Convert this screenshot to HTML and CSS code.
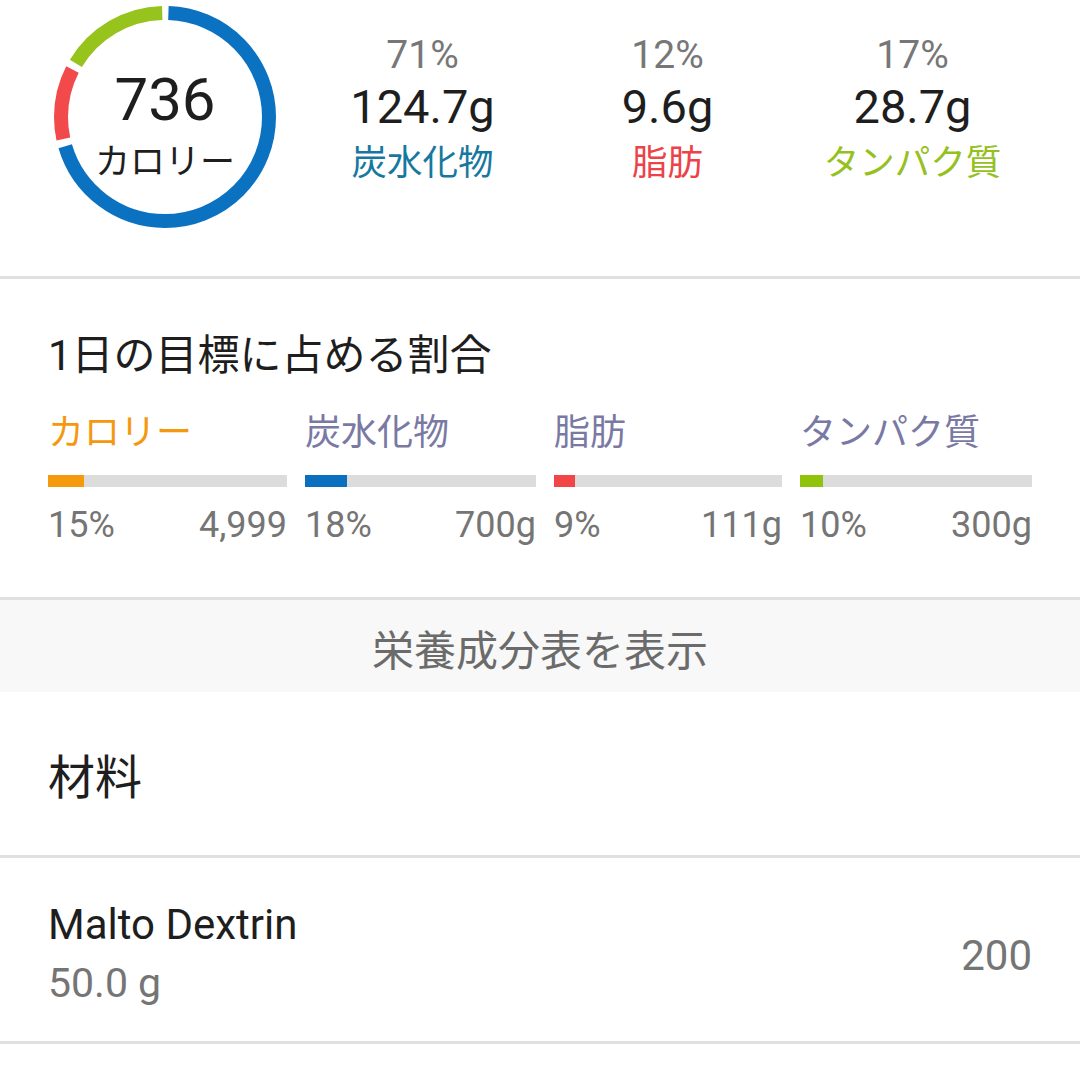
FILE: index.html
```html
<!DOCTYPE html>
<html lang="ja">
<head>
<meta charset="utf-8">
<link rel="stylesheet" href="styles.css">
</head>
<body>
<section class="summary">
  <div class="ring">
    <svg class="ring-svg" viewBox="0 0 222 222" width="222" height="222">
      <g transform="rotate(-90 111 111)">
        <circle cx="111" cy="111" r="104" fill="none" stroke="#0b72c2" stroke-width="14" stroke-dasharray="456.4 653.45" stroke-dashoffset="-3.5"/>
        <circle cx="111" cy="111" r="104" fill="none" stroke="#f24a4a" stroke-width="14" stroke-dasharray="71.4 653.45" stroke-dashoffset="-467.45"/>
        <circle cx="111" cy="111" r="104" fill="none" stroke="#96c31c" stroke-width="14" stroke-dasharray="104.1 653.45" stroke-dashoffset="-545.86"/>
      </g>
    </svg>
    <div class="ring-text">
      <div class="ring-num">736</div>
      <div class="ring-label">カロリー</div>
    </div>
  </div>
  <div class="macros">
    <div class="macro">
      <div class="macro-pct">71%</div>
      <div class="macro-val">124.7g</div>
      <div class="macro-name carb">炭水化物</div>
    </div>
    <div class="macro">
      <div class="macro-pct">12%</div>
      <div class="macro-val">9.6g</div>
      <div class="macro-name fat">脂肪</div>
    </div>
    <div class="macro">
      <div class="macro-pct">17%</div>
      <div class="macro-val">28.7g</div>
      <div class="macro-name protein">タンパク質</div>
    </div>
  </div>
</section>

<section class="goals">
  <h2 class="goals-title">1日の目標に占める割合</h2>
  <div class="goal-grid">
    <div class="goal">
      <div class="goal-name cal">カロリー</div>
      <div class="bar"><div class="fill fill-cal" style="width:15%"></div></div>
      <div class="goal-vals"><span>15%</span><span>4,999</span></div>
    </div>
    <div class="goal">
      <div class="goal-name">炭水化物</div>
      <div class="bar"><div class="fill fill-carb" style="width:18%"></div></div>
      <div class="goal-vals"><span>18%</span><span>700g</span></div>
    </div>
    <div class="goal">
      <div class="goal-name">脂肪</div>
      <div class="bar"><div class="fill fill-fat" style="width:9%"></div></div>
      <div class="goal-vals"><span>9%</span><span>111g</span></div>
    </div>
    <div class="goal">
      <div class="goal-name">タンパク質</div>
      <div class="bar"><div class="fill fill-protein" style="width:10%"></div></div>
      <div class="goal-vals"><span>10%</span><span>300g</span></div>
    </div>
  </div>
</section>

<div class="show-table">栄養成分表を表示</div>

<section class="ingredients-head">
  <h2 class="ing-title">材料</h2>
</section>

<div class="ing-row">
  <div class="ing-info">
    <div class="ing-name">Malto Dextrin</div>
    <div class="ing-amount">50.0 g</div>
  </div>
  <div class="ing-cal">200</div>
</div>
</body>
</html>
```

FILE: styles.css
```css
html, body {
  margin: 0;
  padding: 0;
  background: #ffffff;
}
body {
  font-family: Roboto, "Noto Sans CJK JP", sans-serif;
  color: #1e1e1e;
  width: 1080px;
}

/* top summary */
.summary {
  display: flex;
  height: 276px;
  border-bottom: 3px solid #e0e0e0;
  box-sizing: content-box;
}
.ring {
  display: grid;
  width: 222px;
  height: 222px;
  margin: 6px 0 0 54px;
}
.ring-svg, .ring-text {
  grid-area: 1 / 1;
}
.ring-text {
  display: flex;
  flex-direction: column;
  align-items: center;
  padding-top: 64px;
}
.ring-num {
  font-size: 60px;
  line-height: 60px;
  color: #1e1e1e;
}
.ring-label {
  font-size: 35px;
  line-height: 40px;
  margin-top: 13px;
  color: #1e1e1e;
}
.macros {
  display: grid;
  grid-template-columns: repeat(3, 245px);
  margin-left: 24px;
}
.macro {
  display: flex;
  flex-direction: column;
  align-items: center;
  padding-top: 33px;
}
.macro-pct {
  font-size: 39px;
  line-height: 44px;
  color: #777777;
}
.macro-val {
  font-size: 47px;
  line-height: 52px;
  margin-top: 4px;
  color: #1e1e1e;
}
.macro-name {
  font-size: 35.5px;
  line-height: 44px;
  margin-top: 8px;
}
.carb { color: #17789f; }
.fat { color: #ec4248; }
.protein { color: #95c11f; }

/* goals */
.goals {
  padding: 53px 48px 50px 48px;
  border-bottom: 3px solid #e0e0e0;
}
.goals-title {
  margin: 0;
  font-weight: 400;
  font-size: 42px;
  line-height: 48px;
  color: #1e1e1e;
}
.goal-grid {
  display: grid;
  grid-template-columns: 239px 231px 228px 232px;
  column-gap: 18px;
  margin-top: 31px;
}
.goal-name {
  font-size: 36px;
  line-height: 44px;
  color: #7a79a4;
}
.goal-name.cal { color: #f4990f; }
.bar {
  height: 12px;
  margin-top: 20px;
  background: #dcdcdc;
}
.fill { height: 100%; }
.fill-cal { background: #f59a0c; }
.fill-carb { background: #0b6fbf; }
.fill-fat { background: #f24545; }
.fill-protein { background: #92c30c; }
.goal-vals {
  display: flex;
  justify-content: space-between;
  margin-top: 16px;
  font-size: 36px;
  line-height: 44px;
  color: #757575;
}

/* show table */
.show-table {
  height: 92px;
  background: #f8f8f8;
  display: flex;
  align-items: center;
  justify-content: center;
  font-size: 42px;
  color: #6b6b6b;
  padding-top: 2px;
  box-sizing: border-box;
}

/* ingredients */
.ingredients-head {
  padding: 60px 48px 51px 48px;
  border-bottom: 3px solid #e0e0e0;
}
.ing-title {
  margin: 0;
  font-weight: 400;
  font-size: 47px;
  line-height: 52px;
  color: #1e1e1e;
}
.ing-row {
  display: flex;
  align-items: center;
  justify-content: space-between;
  padding: 43px 48px 34px 48px;
  border-bottom: 3px solid #e0e0e0;
}
.ing-name {
  font-size: 42px;
  line-height: 48px;
  color: #1e1e1e;
}
.ing-amount {
  font-size: 41px;
  line-height: 48px;
  margin-top: 10px;
  color: #757575;
}
.ing-cal {
  font-size: 42px;
  line-height: 48px;
  color: #757575;
  margin-top: 4px;
}
```
